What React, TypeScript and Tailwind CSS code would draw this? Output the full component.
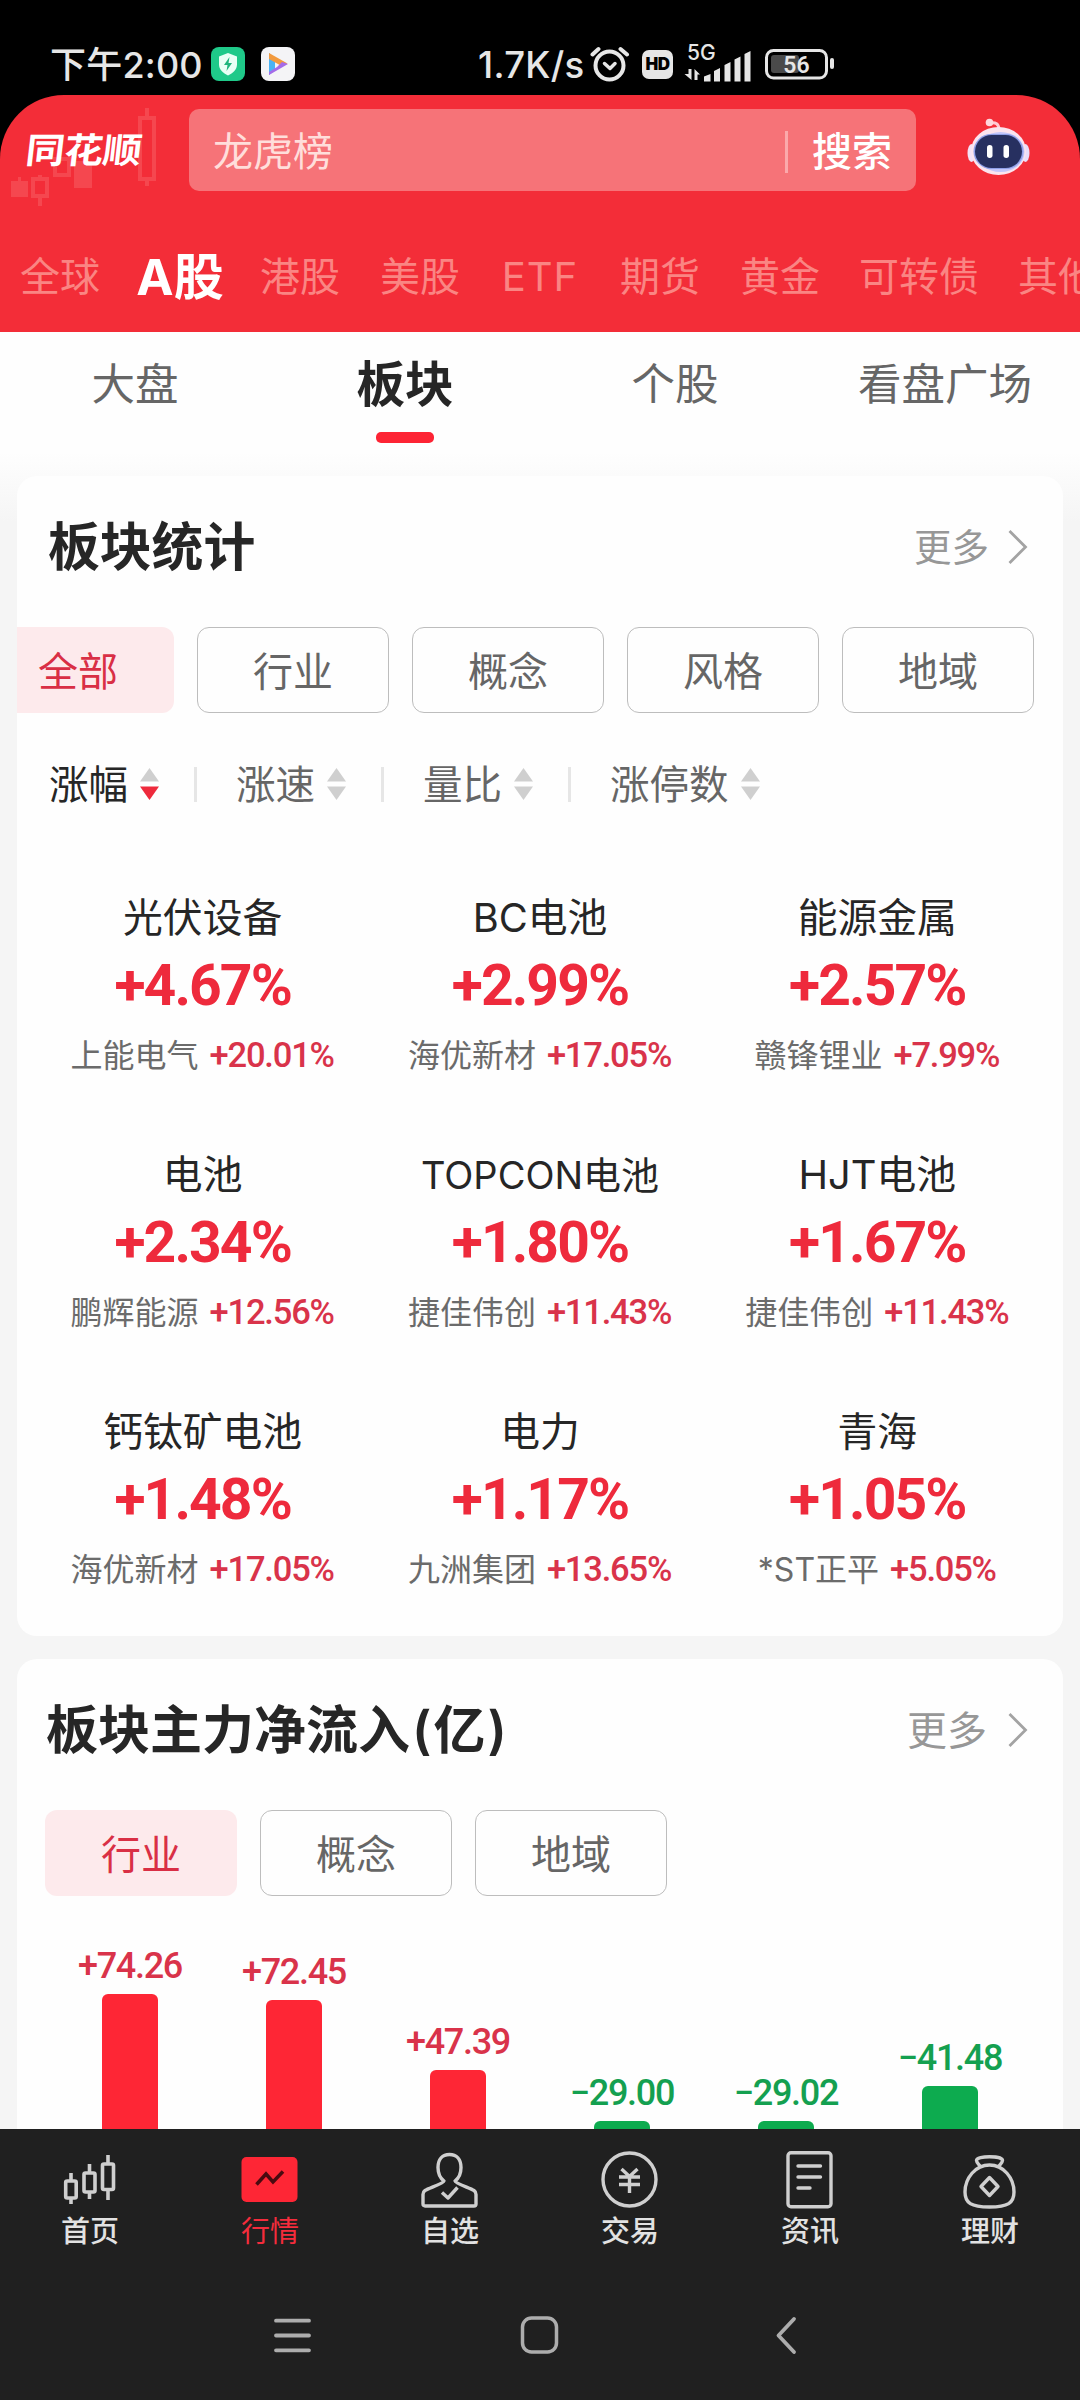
import React, { useState } from 'react';
import clsx from 'clsx';

const MARKETS = ['全球', 'A股', '港股', '美股', 'ETF', '期货', '黄金', '可转债', '其他'];
const SUB_TABS = ['大盘', '板块', '个股', '看盘广场'];
const STAT_FILTERS = ['全部', '行业', '概念', '风格', '地域'];
const FLOW_FILTERS = ['行业', '概念', '地域'];
const SORTS = ['涨幅', '涨速', '量比', '涨停数'];

const SECTORS = [
  { name: '光伏设备', change: '+4.67%', stock: '上能电气', stockChange: '+20.01%' },
  { name: 'BC电池', change: '+2.99%', stock: '海优新材', stockChange: '+17.05%' },
  { name: '能源金属', change: '+2.57%', stock: '赣锋锂业', stockChange: '+7.99%' },
  { name: '电池', change: '+2.34%', stock: '鹏辉能源', stockChange: '+12.56%' },
  { name: 'TOPCON电池', change: '+1.80%', stock: '捷佳伟创', stockChange: '+11.43%' },
  { name: 'HJT电池', change: '+1.67%', stock: '捷佳伟创', stockChange: '+11.43%' },
  { name: '钙钛矿电池', change: '+1.48%', stock: '海优新材', stockChange: '+17.05%' },
  { name: '电力', change: '+1.17%', stock: '九洲集团', stockChange: '+13.65%' },
  { name: '青海', change: '+1.05%', stock: '*ST正平', stockChange: '+5.05%' },
];

const FLOWS = [
  { label: '+74.26', height: 135, up: true },
  { label: '+72.45', height: 129, up: true },
  { label: '+47.39', height: 59, up: true },
  { label: '−29.00', height: 8, up: false },
  { label: '−29.02', height: 8, up: false },
  { label: '−41.48', height: 43, up: false },
];

function StatusBar() {
  return (
    <div className="flex h-[95px] shrink-0 items-start bg-black pt-[42px] text-[#e6e6e6]">
      <div className="ml-[50px] flex h-[46px] w-[161px] items-center whitespace-nowrap text-[36px] font-medium tracking-[0.2px]">下午2:00</div>
      <svg className="mt-[5px]" width="34" height="34" viewBox="0 0 34 34">
        <rect width="34" height="34" rx="8" fill="#1fc989" />
        <path d="M17 6l9 3.500v8c0 5-4 8.500-9 11-5-2.500-9-6-9-11v-8z" fill="#e9fff5" />
        <path d="M18.500 10l-5.500 8h3.500l-1 6 5.500-8h-3.500z" fill="#1fb57c" />
      </svg>
      <svg className="ml-4 mt-[5px]" width="34" height="34" viewBox="0 0 34 34">
        <rect width="34" height="34" rx="8" fill="#f4f4f6" />
        <path d="M8 6v22l6-4.500V11z" fill="#4bb3f3" />
        <path d="M8 6l18.500 10.500-6 2.500L8 12z" fill="#f29a3e" />
        <path d="M27 17L8 28v-3l8-5 5-5z" fill="#a56be8" />
      </svg>
      <div className="ml-[183px] flex h-[46px] w-[112px] items-center whitespace-nowrap text-[36.500px] font-medium tracking-[0.300px]">1.7K/s</div>
      <svg className="mt-1" width="40" height="36" viewBox="0 0 40 36" fill="none" stroke="#e6e6e6" strokeLinecap="round">
        <circle cx="19.500" cy="19.500" r="14" strokeWidth="4" />
        <path d="M14.500 17.500l5.500 5 5-5" strokeWidth="3.500" strokeLinejoin="round" />
        <path d="M2.500 8.500l6-5.500M37 8.500l-6.500-5.500" strokeWidth="4" />
      </svg>
      <div className="ml-[12px] mt-[8px] flex h-[29px] w-[31px] items-center justify-center rounded-[7px] bg-[#e6e6e6] text-[17px] font-black tracking-[-0.5px] text-black">HD</div>
      <svg className="ml-[11px] -mt-[4px]" width="68" height="44" viewBox="0 -6 68 44" fill="#e6e6e6">
        <text x="3" y="16" fontSize="21" fontFamily="Inter" fontWeight="500">5G</text>
        <path d="M4.500 25h3v11l-7-6h4zM10.500 36V25l5.500 5.500h-2.500V36z" />
        <path d="M20 32.500l6.500-2.500v7.500H20z" />
        <path d="M30 27l6-3v13.500h-6zM40.500 21l6-3v19.500h-6zM50.500 15.500l6-3v25h-6zM60.500 10l6-3v30.500h-6z" />
      </svg>
      <svg className="ml-[13px] mt-[7px]" width="70" height="31" viewBox="0 0 70 31">
        <rect x="1.500" y="1.500" width="60" height="27.500" rx="7" fill="none" stroke="#e6e6e6" strokeWidth="3" />
        <rect x="6" y="6" width="28" height="18" rx="3" fill="#4a4a4a" />
        <rect x="65" y="9" width="4" height="11" rx="2" fill="#e6e6e6" />
        <text x="31.500" y="23.500" textAnchor="middle" fontSize="23" fontFamily="Roboto" fontWeight="600" fill="#e6e6e6">56</text>
      </svg>
    </div>
  );
}

function RobotIcon() {
  return (
    <svg width="64" height="60" viewBox="0 0 64 60">
      <path d="M23 5c6-1 8.500 1 9 6" fill="none" stroke="#ffc9d2" strokeWidth="3" />
      <circle cx="22.500" cy="4.500" r="3.800" fill="#ffd6dc" />
      <ellipse cx="4.500" cy="35" rx="4" ry="9" fill="#f3e2f6" />
      <ellipse cx="58.500" cy="35" rx="4" ry="9" fill="#e9defa" />
      <ellipse cx="31.500" cy="33" rx="27.500" ry="24" fill="#fbe4ee" />
      <ellipse cx="33.500" cy="34" rx="24" ry="20" fill="#c3c6fa" />
      <rect x="6.500" y="16" width="50" height="35" rx="17.500" fill="#8fa0e8" />
      <rect x="8" y="17" width="47" height="33" rx="16.500" fill="#273060" />
      <rect x="20" y="27" width="5.500" height="13" rx="2.700" fill="#fff" />
      <rect x="36.500" y="27" width="5.500" height="13" rx="2.700" fill="#fff" />
    </svg>
  );
}

function Brand() {
  return (
    <div className="relative h-[120px] w-[189px] shrink-0">
      {/* Faint candlesticks behind the wordmark */}
      <svg className="absolute left-0 top-0" width="189" height="120" viewBox="0 0 189 120">
        <g fill="#f5474f" stroke="#f5474f">
          <path d="M11 86h17v16H11z" stroke="none" />
          <path d="M19.500 82v5" strokeWidth="3" />
          <path d="M33 84h14v17H33zM40 80v4M40 101v10" strokeWidth="4" fill="none" />
          <path d="M55 64h14v16H55z" strokeWidth="4" fill="none" />
          <path d="M74 66h18v27H74z" stroke="none" />
          <path d="M140 23h14v61h-14zM147 13v10M147 84v7" strokeWidth="4" fill="none" />
        </g>
      </svg>
      <div className="absolute left-[26px] top-[33px] -skew-x-6 scale-y-90 whitespace-nowrap text-[39px] font-bold leading-[44px] tracking-[-0.5px] text-white">同花顺</div>
    </div>
  );
}

function Header() {
  const [market, setMarket] = useState('A股');
  return (
    <div className="bg-black">
      <header className="h-[237px] overflow-hidden rounded-t-[64px] bg-[#f32d38]">
        <div className="flex h-[120px]">
          <Brand />
          <div className="mt-[14px] flex h-[82px] w-[727px] items-center rounded-[10px] bg-[#f67378] pl-[24px] pt-[3px] text-[40px]">
            <span className="text-[#ffdedb]">龙虎榜</span>
            <span className="ml-auto h-[42px] w-[3px] bg-[#fba9ab]" />
            <span className="ml-[24px] mr-[24px] font-medium text-white">搜索</span>
          </div>
          <div className="ml-[51px] mt-[23px]">
            <RobotIcon />
          </div>
        </div>
        <nav className="flex h-[117px] gap-[40px] whitespace-nowrap pl-[20px] pt-[30px]">
          {MARKETS.map((m) => (
            <button
              key={m}
              onClick={() => setMarket(m)}
              className={clsx(
                'flex h-[64px] shrink-0 items-center justify-center',
                m.length === 3 && m !== 'ETF' ? 'w-[118px]' : 'w-[80px]',
                m === market ? 'text-[50px] font-bold text-white' : 'text-[40px] text-[#fa8583]',
                m === 'ETF' && 'tracking-[1px]',
              )}
            >
              {m}
            </button>
          ))}
        </nav>
      </header>
    </div>
  );
}

function SubTabs() {
  return (
    <div className="grid h-[128px] grid-cols-4">
      {SUB_TABS.map((t) => {
        const active = t === '板块';
        return (
          <div key={t} className="flex flex-col items-center pt-[18px]">
            <div className={clsx('flex h-[70px] items-center', active ? 'text-[48.500px] font-bold text-[#262626]' : 'text-[43.500px] text-[#666]')}>
              {t}
            </div>
            {active && <div className="mt-[12px] h-[11px] w-[58px] rounded-[5px] bg-[#fd2434]" />}
          </div>
        );
      })}
    </div>
  );
}

function Chip({ label, active }: { label: string; active: boolean }) {
  return (
    <button
      className={clsx(
        'flex h-[86px] w-[192px] shrink-0 items-center justify-center rounded-[12px] pt-[3px] text-[40px]',
        active ? 'bg-[#fdeaec] text-[#d92f45]' : 'border border-[#bdbdbd] text-[#666]',
      )}
    >
      {label}
    </button>
  );
}

function SortArrows({ active }: { active?: boolean }) {
  return (
    <svg className="ml-[12px]" width="19" height="32" viewBox="0 0 19 32">
      <path d="M9.500 0L19 13.500H0z" fill="#cfcfcf" />
      <path d="M9.500 32L0 18.500h19z" fill={active ? '#ee2a3c' : '#cfcfcf'} />
    </svg>
  );
}

function Chevron() {
  return (
    <svg width="20" height="36" viewBox="0 0 20 36" fill="none" stroke="#a3a3a3" strokeWidth="2.800">
      <path d="M1.500 1L17.500 17 1.500 33" />
    </svg>
  );
}

function SectorStats() {
  return (
    <section className="h-[1160px] overflow-hidden rounded-[20px] bg-[#fefefe]">
      <div className="flex h-[142px] items-center pl-[31px] pr-[35px] pt-[2px]">
        <h2 className="text-[51.800px] font-bold text-[#262626]">板块统计</h2>
        <span className="ml-auto mr-[19px] text-[37.500px] text-[#979797]">更多</span>
        <Chevron />
      </div>
      <div className="-ml-[35px] mt-[9px] flex gap-[23px]">
        {STAT_FILTERS.map((f) => (
          <Chip key={f} label={f} active={f === '全部'} />
        ))}
      </div>
      <div className="mt-[39px] flex h-[64px] items-center pl-[32px] text-[39.500px]">
        {SORTS.map((s, i) => (
          <React.Fragment key={s}>
            {i > 0 && <span className="ml-[35px] mr-[39px] h-[35px] w-[3px] bg-[#e6e6e6]" />}
            <span className={clsx('pt-[3px]', i === 0 ? 'text-[#262626]' : 'text-[#666]')}>{s}</span>
            <SortArrows active={i === 0} />
          </React.Fragment>
        ))}
      </div>
      <div className="mt-[73px] grid grid-cols-3 gap-y-[53px] px-[17px]">
        {SECTORS.map((s) => (
          <div key={s.name} className="flex h-[204px] flex-col items-center whitespace-nowrap">
            <div className={clsx('flex h-[58px] items-center text-[#262626]', s.name.startsWith('TOP') ? 'text-[38px]' : 'text-[39.800px]')}>
              {s.name}
            </div>
            <div className="mt-[4px] flex h-[70px] items-center font-[Roboto] text-[57px] font-bold tracking-[-1.900px] text-[#ee2a3c]">{s.change}</div>
            <div className="mt-[7px] flex h-[56px] items-center">
              <span className="text-[32px] text-[#6b6b6b]">{s.stock}</span>
              <span className="ml-[11px] mr-px font-[Roboto] text-[34.500px] font-medium tracking-[-1.200px] text-[#d9334a]">{s.stockChange}</span>
            </div>
          </div>
        ))}
      </div>
    </section>
  );
}

function CapitalFlow() {
  return (
    <section className="flex h-[470px] flex-col overflow-hidden rounded-t-[20px] bg-[#fefefe]">
      <div className="flex h-[142px] shrink-0 items-center pl-[29px] pr-[35px] pt-[2px]">
        <h2 className="text-[52px] font-bold text-[#262626]">
          板块主力净流入<span className="mx-[2px] font-semibold">(</span>亿<span className="ml-[2px] font-semibold">)</span>
        </h2>
        <span className="ml-auto mr-[21px] text-[40px] text-[#979797]">更多</span>
        <Chevron />
      </div>
      <div className="mt-[9px] flex gap-[23px] pl-[28px]">
        {FLOW_FILTERS.map((f) => (
          <Chip key={f} label={f} active={f === '行业'} />
        ))}
      </div>
      <div className="mt-auto grid grid-cols-6 items-end pl-[31px] pr-[31px]">
        {FLOWS.map((f) => (
          <div key={f.label} className="flex flex-col items-center">
            <span className={clsx('font-[Roboto] text-[36px] font-medium leading-[40px] tracking-[-1.300px]', f.up ? 'text-[#d9334a]' : 'text-[#14a050]')}>{f.label}</span>
            <div className={clsx('mt-[8px] w-[56px] rounded-t-[6px]', f.up ? 'bg-[#fe2635]' : 'bg-[#0dab4f]')} style={{ height: f.height }} />
          </div>
        ))}
      </div>
    </section>
  );
}

const TAB_ICONS = [
  {
    label: '首页',
    icon: (
      <g strokeWidth="3.600">
        <rect x="5.700" y="32" width="10.500" height="17" rx="1.500" />
        <path d="M11 24v8M11 49v6" />
        <rect x="24" y="24" width="11" height="19" rx="1.500" />
        <path d="M29.500 15v9M29.500 43v7" />
        <rect x="42.500" y="15" width="11" height="25.500" rx="1.500" />
        <path d="M48 6v9M48 40.500v10.500" />
      </g>
    ),
  },
  {
    label: '行情',
    icon: (
      <>
        <rect x="1.500" y="8" width="56" height="45" rx="5" fill="#fe2635" stroke="none" />
        <path d="M16.500 35.500l9.500-10.500 7 8 10-10.500" stroke="#4a0a10" strokeWidth="3.500" />
      </>
    ),
  },
  {
    label: '自选',
    icon: (
      <g strokeWidth="3.400" strokeLinejoin="round">
        <path d="M24 32c-4-3-6-7-6-13.500C18 10 22.500 5.500 29.500 5.500S41 10 41 18.500c0 6.500-2 10.500-6 13.500 0 2 14.500 7 19 9.500 1.500 1 2 2 2 4v9.500c0 1.500-1 2-2 2H5c-1 0-2-.5-2-2V45.500c0-2 .5-3 2-4 4.500-2.500 19-7.500 19-9.500z" />
        <path d="M22 43.500l6 5.500 9.500-10.500" />
      </g>
    ),
  },
  {
    label: '交易',
    icon: (
      <g strokeWidth="3.400">
        <circle cx="29.500" cy="30.500" r="26.500" />
        <path d="M21.500 20l8 7.500 8-7.500M19 28h21M19 35.500h21M29.500 27v17" />
      </g>
    ),
  },
  {
    label: '资讯',
    icon: (
      <g strokeWidth="3.400" strokeLinecap="round">
        <rect x="8" y="3.700" width="43" height="54" rx="3" />
        <path d="M18 17h22.500M18 28h22.500M18 39h12" />
      </g>
    ),
  },
  {
    label: '理财',
    icon: (
      <g strokeWidth="3.400" strokeLinejoin="round">
        <path d="M20.500 17.500c-1.500-2-4-4-4-6 0-5 26-5 26 0 0 2-2.500 4-4 6" />
        <path d="M29.500 16C15.500 16 5 29 5 43c0 11 6 15 24.500 15S54 54 54 43C54 29 43.500 16 29.500 16z" />
        <path d="M29.500 28.500l8.500 9-8.500 9-8.500-9z" />
      </g>
    ),
  },
];

function BottomBar() {
  return (
    <footer className="h-[271px] shrink-0 bg-[#202020]">
      <div className="grid h-[150px] grid-cols-6">
        {TAB_ICONS.map((t) => {
          const active = t.label === '行情';
          return (
            <div key={t.label} className="flex flex-col items-center pt-[20px]">
              <svg width="60" height="60" viewBox="0 0 60 60" fill="none" stroke="#cfcfcf">
                {t.icon}
              </svg>
              <span className={clsx('mt-[2px] text-[29px] leading-[42px]', active ? 'text-[#f52c3c]' : 'font-medium text-[#e2e2e2]')}>{t.label}</span>
            </div>
          );
        })}
      </div>
      {/* System navigation */}
      <div className="flex items-center justify-center gap-[207px] pt-[36px]">
        <svg width="40" height="40" viewBox="0 0 40 40" fill="none" stroke="#adadad" strokeWidth="3.800" strokeLinecap="round">
          <path d="M3 5.700h33M3 20.500h33M3 35.300h33" />
        </svg>
        <svg width="40" height="40" viewBox="0 0 40 40" fill="none" stroke="#adadad" strokeWidth="3.500">
          <rect x="2.500" y="3" width="34" height="34" rx="9" />
        </svg>
        <svg width="40" height="40" viewBox="0 0 40 40" fill="none" stroke="#adadad" strokeWidth="3.800" strokeLinecap="round" strokeLinejoin="round">
          <path d="M27 4L11.500 20.500 27 37" />
        </svg>
      </div>
    </footer>
  );
}

export default function App() {
  return (
    <div className="flex h-[2400px] w-[1080px] flex-col overflow-hidden bg-[#f5f5f5] font-[Inter,'Noto_Sans_CJK_SC',sans-serif]">
      <StatusBar />
      <Header />
      <main className="flex flex-1 flex-col bg-[linear-gradient(to_bottom,#fefefe_120px,#f5f5f5_190px)]">
        <SubTabs />
        <div className="flex flex-col gap-[23px] px-[17px] pt-[16px]">
          <SectorStats />
          <CapitalFlow />
        </div>
      </main>
      <BottomBar />
    </div>
  );
}
